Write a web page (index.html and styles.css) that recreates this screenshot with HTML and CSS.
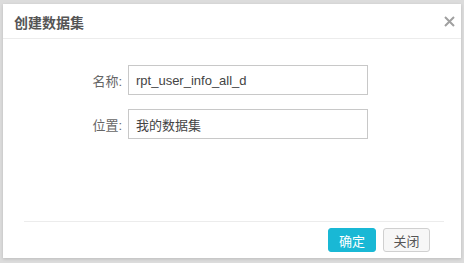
FILE: index.html
```html
<!DOCTYPE html>
<html lang="zh-CN">
<head>
    <meta charset="UTF-8">
    <title>创建数据集</title>
    <link rel="stylesheet" href="styles.css">
</head>
<body>
    <div class="backdrop">
        <div class="modal">
            <div class="modal-header">
                <span class="modal-title">创建数据集</span>
                <svg class="close" width="11" height="11" viewBox="0 0 11 11">
                    <path d="M1 1L10 10M10 1L1 10" stroke="#a0a0a0" stroke-width="2" fill="none"/>
                </svg>
            </div>
            <div class="modal-body">
                <div class="form-row">
                    <label class="form-label">名称:</label>
                    <input class="form-input" type="text" value="rpt_user_info_all_d">
                </div>
                <div class="form-row">
                    <label class="form-label">位置:</label>
                    <input class="form-input" type="text" value="我的数据集">
                </div>
            </div>
            <div class="modal-footer">
                <button class="btn btn-primary">确定</button>
                <button class="btn">关闭</button>
            </div>
        </div>
    </div>
</body>
</html>
```

FILE: styles.css
```css
body {
    margin: 0;
    background: #dcdcdc;
    font-family: "Liberation Sans", "Noto Sans CJK SC", sans-serif;
}

.backdrop {
    padding: 4px 3px 5px 3px;
    height: 254px;
}

.modal {
    background: #fff;
    height: 254px;
    display: flex;
    flex-direction: column;
    box-shadow: 0 1px 3px rgba(0, 0, 0, 0.15);
}

.modal-header {
    height: 34px;
    border-bottom: 1px solid #ececec;
    display: flex;
    align-items: center;
    justify-content: space-between;
    padding: 1px 6px 0 11px;
    box-sizing: border-box;
    height: 35px;
}

.modal-title {
    font-size: 14px;
    font-weight: bold;
    color: #555;
}

.close {
    display: block;
}

.modal-body {
    flex: 1;
    padding-top: 26px;
    display: flex;
    flex-direction: column;
    gap: 14px;
}

.form-row {
    display: flex;
    align-items: center;
}

.form-label {
    width: 119px;
    text-align: right;
    padding-right: 6px;
    font-size: 13px;
    color: #666;
}

.form-input {
    width: 240px;
    height: 30px;
    box-sizing: border-box;
    border: 1px solid #c8c8c8;
    padding: 0 7px;
    font-family: inherit;
    font-size: 13px;
    color: #444;
    outline: none;
}

.modal-footer {
    margin: 0 17px 0 21px;
    border-top: 1px solid #ececec;
    padding: 6px 14px 6px 0;
    display: flex;
    justify-content: flex-end;
    gap: 7px;
}

.btn {
    height: 24px;
    width: 47px;
    border: 1px solid #d0d0d0;
    border-radius: 3px;
    background: #f7f7f7;
    font-family: inherit;
    font-size: 13px;
    color: #555;
    padding: 0;
}

.btn-primary {
    width: 48px;
    background: #19b8d5;
    border-color: #19b8d5;
    color: #fff;
}
```
